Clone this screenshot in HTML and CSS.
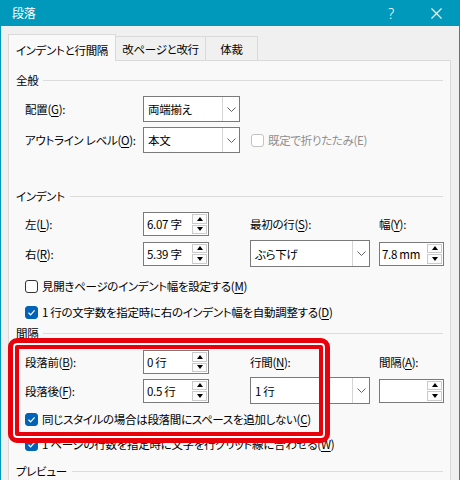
FILE: index.html
```html
<!DOCTYPE html>
<html lang="ja">
<head>
<meta charset="utf-8">
<title>段落</title>
<link rel="stylesheet" href="styles.css">
</head>
<body>
<div class="window">
  <div class="titlebar">
    <span class="title">段落</span>
    <span class="help">?</span>
    <span class="close"><svg width="11" height="11" viewBox="0 0 11 11"><path d="M0.5 0.5L10.5 10.5M10.5 0.5L0.5 10.5" stroke="#fff" stroke-width="1.1" fill="none"/></svg></span>
  </div>
  <div class="tabs">
    <div class="tab active">インデントと行間隔</div>
    <div class="tab t2">改ページと改行</div>
    <div class="tab t3">体裁</div>
  </div>
  <div class="panel">
    <div class="head"><span>全般</span></div>
    <div class="row h26 m6">
      <span class="lbl">配置(<u>G</u>):</span>
      <div class="combo w97"><span class="val">両端揃え</span><span class="dd"><svg width="9" height="5" viewBox="0 0 9 5"><path d="M0.5 0.5L4.5 4.5L8.5 0.5" stroke="#606060" fill="none"/></svg></span></div>
    </div>
    <div class="row h26 m5">
      <span class="lbl">アウトライン レベル(<u>O</u>):</span>
      <div class="combo w97"><span class="val">本文</span><span class="dd"><svg width="9" height="5" viewBox="0 0 9 5"><path d="M0.5 0.5L4.5 4.5L8.5 0.5" stroke="#606060" fill="none"/></svg></span></div>
      <div class="cb inline disabled span2"><span class="box"></span><span>既定で折りたたみ(E)</span></div>
    </div>

    <div class="head m33"><span>インデント</span></div>
    <div class="row h24 m6">
      <span class="lbl">左(<u>L</u>):</span>
      <div class="spin"><span class="val">6.07 字</span><span class="btns"><i><b class="up"></b></i><i><b class="down"></b></i></span></div>
      <span class="lbl">最初の行(<u>S</u>):</span>
      <span class="lbl">幅(<u>Y</u>):</span>
    </div>
    <div class="row h27 m4">
      <span class="lbl">右(<u>R</u>):</span>
      <div class="spin"><span class="val">5.39 字</span><span class="btns"><i><b class="up"></b></i><i><b class="down"></b></i></span></div>
      <div class="combo w120 h27"><span class="val">ぶら下げ</span><span class="dd"><svg width="9" height="5" viewBox="0 0 9 5"><path d="M0.5 0.5L4.5 4.5L8.5 0.5" stroke="#606060" fill="none"/></svg></span></div>
      <div class="spin w65"><span class="val tight">7.8 mm</span><span class="btns"><i><b class="up"></b></i><i><b class="down"></b></i></span></div>
    </div>
    <div class="cb m9"><span class="box"></span><span>見開きページのインデント幅を設定する(<u>M</u>)</span></div>
    <div class="cb m6"><span class="box on"><svg width="11" height="11" viewBox="0 0 11 11"><path d="M2.5 5.8L4.6 7.8L8.6 3.4" stroke="#fff" stroke-width="1.2" fill="none"/></svg></span><span>1 行の文字数を指定時に右のインデント幅を自動調整する(<u>D</u>)</span></div>

    <div class="head m1"><span>間隔</span></div>
    <div class="row h24 m7">
      <span class="lbl">段落前(<u>B</u>):</span>
      <div class="spin"><span class="val">0 行</span><span class="btns"><i><b class="up"></b></i><i><b class="down"></b></i></span></div>
      <span class="lbl">行間(<u>N</u>):</span>
      <span class="lbl">間隔(<u>A</u>):</span>
    </div>
    <div class="row h27 m3">
      <span class="lbl">段落後(<u>F</u>):</span>
      <div class="spin"><span class="val">0.5 行</span><span class="btns"><i><b class="up"></b></i><i><b class="down"></b></i></span></div>
      <div class="combo w120 h27"><span class="val">1 行</span><span class="dd"><svg width="9" height="5" viewBox="0 0 9 5"><path d="M0.5 0.5L4.5 4.5L8.5 0.5" stroke="#606060" fill="none"/></svg></span></div>
      <div class="spin w65"><span class="val"></span><span class="btns"><i><b class="up"></b></i><i><b class="down"></b></i></span></div>
    </div>
    <div class="cb m5"><span class="box on"><svg width="11" height="11" viewBox="0 0 11 11"><path d="M2.5 5.8L4.6 7.8L8.6 3.4" stroke="#fff" stroke-width="1.2" fill="none"/></svg></span><span>同じスタイルの場合は段落間にスペースを追加しない(<u>C</u>)</span></div>
    <div class="cb m5"><span class="box on"><svg width="11" height="11" viewBox="0 0 11 11"><path d="M2.5 5.8L4.6 7.8L8.6 3.4" stroke="#fff" stroke-width="1.2" fill="none"/></svg></span><span>1 ページの行数を指定時に文字を行グリッド線に合わせる(<u>W</u>)</span></div>

    <div class="head m7"><span>プレビュー</span></div>
  </div>
  <div class="highlight"></div>
</div>
</body>
</html>
```

FILE: styles.css
```css
* { box-sizing: border-box; }
html, body { margin: 0; padding: 0; }
body {
  width: 460px;
  height: 480px;
  overflow: hidden;
  background: #f0f0f0;
  font-family: "Noto Sans CJK JP", "Noto Sans", sans-serif;
  font-size: 11.5px;
  letter-spacing: -0.3px;
  color: #000;
  font-feature-settings: "palt";
}
u { text-decoration-thickness: 1px; text-underline-offset: 2px; }

.window {
  position: relative;
  width: 460px;
  height: 480px;
  border-left: 1px solid #0099bc;
  border-right: 1px solid #0099bc;
  overflow: hidden;
}

.titlebar {
  height: 26px;
  background: #0099bc;
  color: #fff;
  display: flex;
  align-items: center;
  padding-left: 11px;
}
.title { flex: 1; font-size: 12px; line-height: 26px; }
.help {
  width: 20px;
  text-align: center;
  font-family: "Noto Sans", sans-serif;
  font-size: 14px;
  font-weight: 300;
  margin-right: 25px;
}
.close {
  width: 20px;
  display: flex;
  justify-content: center;
  margin-right: 13px;
}

.tabs {
  height: 34px;
  display: flex;
  align-items: flex-end;
  padding-left: 7px;
}
.tab {
  height: 24px;
  padding-top: 3px;
  line-height: 18px;
  text-align: center;
  background: #f0f0f0;
  border-top: 1px solid #d9d9d9;
  border-right: 1px solid #d9d9d9;
  white-space: nowrap;
}
.tab.active {
  width: 108px;
  height: 27px;
  padding-top: 6px;
  border-left: 1px solid #d9d9d9;
  background: #f9f9f9;
  margin-bottom: -1px;
  position: relative;
  z-index: 1;
}
.t2 { width: 90px; }
.t3 { width: 52px; }

.panel {
  margin-left: 7px;
  width: 443px;
  height: 430px;
  border: 1px solid #d9d9d9;
  background: #f9f9f9;
  padding: 9px 7px 0 0;
}

.head {
  display: flex;
  align-items: center;
  height: 20px;
  padding-left: 7px;
  gap: 5px;
  white-space: nowrap;
}
.head::after {
  content: "";
  flex: 1;
  height: 1px;
  background: #dcdcdc;
}

.row {
  display: grid;
  grid-template-columns: 118px 107px 129px 65px;
  align-items: center;
  padding-left: 16px;
}
.lbl { white-space: nowrap; }
.h24 { height: 24px; }
.h26 { height: 26px; }
.h27 { height: 27px; }
.m1 { margin-top: 1px; }
.m3 { margin-top: 3px; }
.m4 { margin-top: 4px; }
.m5 { margin-top: 5px; }
.m6 { margin-top: 6px; }
.m7 { margin-top: 7px; }
.m9 { margin-top: 9px; }
.m33 { margin-top: 33px; }

.combo {
  display: flex;
  height: 26px;
  border: 1px solid #7a7a7a;
  background: #fff;
}
.combo.h27 { height: 27px; }
.w97 { width: 97px; }
.w120 { width: 120px; }
.combo .val {
  flex: 1;
  padding-left: 4px;
  display: flex;
  align-items: center;
  white-space: nowrap;
}
.combo .dd {
  width: 17px;
  border-left: 1px solid #d4d4d4;
  display: flex;
  align-items: center;
  justify-content: center;
}

.spin {
  display: flex;
  width: 66px;
  height: 24px;
  border: 1px solid #7a7a7a;
  background: #fff;
}
.spin.w65 { width: 65px; }
.spin .val {
  flex: 1;
  padding-left: 3px;
  display: flex;
  align-items: center;
  white-space: nowrap;
  overflow: hidden;
}
.spin .val.tight { padding-left: 2px; }
.spin .btns {
  width: 16px;
  display: flex;
  flex-direction: column;
  gap: 1px;
  padding: 1px 1px 1px 0;
}
.spin .btns i {
  flex: 1;
  border: 1px solid #cacaca;
  background: #fcfcfc;
  display: flex;
  align-items: center;
  justify-content: center;
}
.up {
  width: 0; height: 0;
  border-left: 3px solid transparent;
  border-right: 3px solid transparent;
  border-bottom: 4px solid #000;
}
.down {
  width: 0; height: 0;
  border-left: 3px solid transparent;
  border-right: 3px solid transparent;
  border-top: 4px solid #000;
}

.cb {
  display: flex;
  align-items: center;
  height: 20px;
  padding-left: 16px;
  gap: 4px;
  white-space: nowrap;
}
.cb.inline { padding-left: 1px; }
.span2 { grid-column: span 2; }
.box {
  width: 13px;
  height: 13px;
  flex: none;
  border: 1px solid #333;
  border-radius: 3px;
  background: #fff;
  display: flex;
  align-items: center;
  justify-content: center;
}
.box.on {
  background: #0063b8;
  border-color: #0063b8;
}
.disabled { color: #8f8f8f; }
.disabled .box { border-color: #c2c2c2; }

.highlight {
  position: absolute;
  left: 7px;
  top: 338px;
  width: 322px;
  height: 105px;
  border: 5px solid #e8000a;
  border-radius: 9px;
  box-shadow: inset 0 0 0 2px #fff, inset 0 0 0 6px #e8000a;
  pointer-events: none;
}
```
